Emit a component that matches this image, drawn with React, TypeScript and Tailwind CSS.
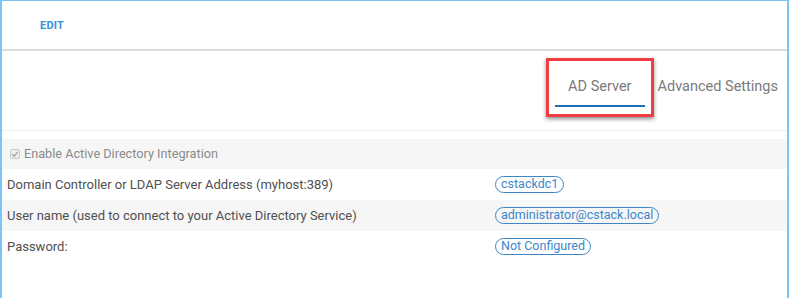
import React from "react";

const rows = [
  { label: "Domain Controller or LDAP Server Address (myhost:389)", value: "cstackdc1", shaded: false },
  { label: "User name (used to connect to your Active Directory Service)", value: "administrator@cstack.local", shaded: true },
  { label: "Password:", value: "Not Configured", shaded: false },
];

export default function App() {
  return (
    <div
      className="w-[789px] h-[298px] bg-white border-t border-l-2 border-r-2 border-[#7cc4f7] overflow-hidden"
      style={{ fontFamily: "Roboto, 'Liberation Sans', sans-serif" }}
    >
      <div className="h-[48px] flex items-center pl-[38px] pt-[2px]">
        <span className="text-[11px] font-bold text-[#3a8fd8] tracking-[0.2px]">EDIT</span>
      </div>
      <div className="h-[2px] bg-[#dcdcdc]" />
      <div className="h-[80px] flex justify-end items-start pt-[25px] border-b border-[#efefef]">
        <div className="relative px-[13px] pb-[7px] border-b-2 border-[#1f6fb5] text-[14.5px] text-[#7a7a7a] leading-[22px]">
          AD Server
          <div className="absolute left-[-9px] right-[-9px] top-[-18px] bottom-[-12px] border-[3px] border-[#ef3e42] shadow-[0_2px_4px_rgba(0,0,0,0.45)]" />
        </div>
        <div className="pl-[13px] pr-[9px] text-[14.5px] text-[#7a7a7a] leading-[22px]">Advanced Settings</div>
      </div>
      <div className="pt-[8px]">
        <div className="h-[30px] bg-[#f6f6f6] flex items-center pl-[8px] gap-[4px] text-[12.7px] text-[#8a8a8a]">
          <span className="w-[10px] h-[10px] border border-[#c8c8c8] rounded-[2px] bg-[#eeeeee] flex items-center justify-center">
            <svg width="8" height="8" viewBox="0 0 8 8">
              <path d="M1.2 4.2 L3.2 6.2 L6.8 1.8" stroke="#a0a0a0" strokeWidth="1.3" fill="none" />
            </svg>
          </span>
          <span>Enable Active Directory Integration</span>
        </div>
        {rows.map((r) => (
          <div
            key={r.label}
            className={`h-[31px] flex items-center text-[13px] text-[#505050] ${r.shaded ? "bg-[#f6f6f6]" : "bg-white"}`}
          >
            <div className="w-[493px] pl-[5px]">{r.label}</div>
            <div className="px-[5px] h-[17px] flex items-center rounded-full border border-[#3d86c8] text-[12.5px] text-[#3d86c8] leading-none">
              {r.value}
            </div>
          </div>
        ))}
      </div>
    </div>
  );
}
